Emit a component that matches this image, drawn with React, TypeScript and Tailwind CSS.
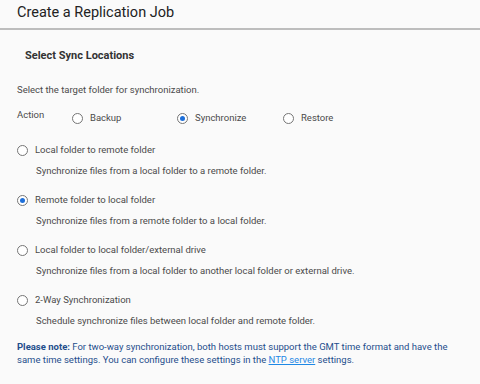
const Radio = ({ checked }: { checked?: boolean }) => (
  <span className="w-[11px] h-[11px] rounded-full border border-[#757575] bg-white flex items-center justify-center shrink-0">
    {checked && <span className="w-[5px] h-[5px] rounded-full bg-[#1e6fd9]" />}
  </span>
);

const options = [
  {
    label: "Local folder to remote folder",
    desc: "Synchronize files from a local folder to a remote folder.",
  },
  {
    label: "Remote folder to local folder",
    desc: "Synchronize files from a remote folder to a local folder.",
    checked: true,
  },
  {
    label: "Local folder to local folder/external drive",
    desc: "Synchronize files from a local folder to another local folder or external drive.",
  },
  {
    label: "2-Way Synchronization",
    desc: "Schedule synchronize files between local folder and remote folder.",
  },
];

export default function App() {
  return (
    <div className="w-[480px] h-[384px] bg-[#fafafa] text-[#4a4a4a] font-['Roboto',sans-serif] overflow-hidden">
      {/* Header */}
      <div className="h-[30px] flex items-center pl-[17px] pb-[2px] border-b-2 border-[#bdbdbd]">
        <h1 className="text-[14.5px] text-[#222] leading-none">Create a Replication Job</h1>
      </div>

      <div className="px-[17px]">
        <h2 className="mt-[19px] pl-[8px] text-[11px] font-bold text-[#333] leading-[14px]">
          Select Sync Locations
        </h2>

        <p className="mt-[20px] text-[9.5px] leading-[13px]">Select the target folder for synchronization.</p>

        <div className="mt-[12px] flex items-start text-[9.5px]">
          <span className="w-[55px] leading-[13px]">Action</span>
          <div className="flex items-center gap-[7px] w-[105px] mt-[3px]">
            <Radio />
            <span>Backup</span>
          </div>
          <div className="flex items-center gap-[7px] w-[106px] mt-[3px]">
            <Radio checked />
            <span>Synchronize</span>
          </div>
          <div className="flex items-center gap-[7px] mt-[3px]">
            <Radio />
            <span>Restore</span>
          </div>
        </div>

        <div className="mt-[15px] flex flex-col">
          {options.map((o) => (
            <div key={o.label} className="flex flex-col h-[50px] text-[9.5px]">
              <div className="flex items-center gap-[7px] h-[20px]">
                <Radio checked={o.checked} />
                <span>{o.label}</span>
              </div>
              <span className="mt-[1px] pl-[19px] leading-[20px]">{o.desc}</span>
            </div>
          ))}
        </div>

        <p className="mt-0 text-[9.5px] leading-[13px] text-[#1f4e8c]">
          <span className="font-bold">Please note:</span> For two-way synchronization, both hosts must support the GMT time format and have the same time settings. You can configure these settings in the{" "}
          <span className="text-[#1e88e5] underline">NTP server</span> settings.
        </p>
      </div>
    </div>
  );
}
